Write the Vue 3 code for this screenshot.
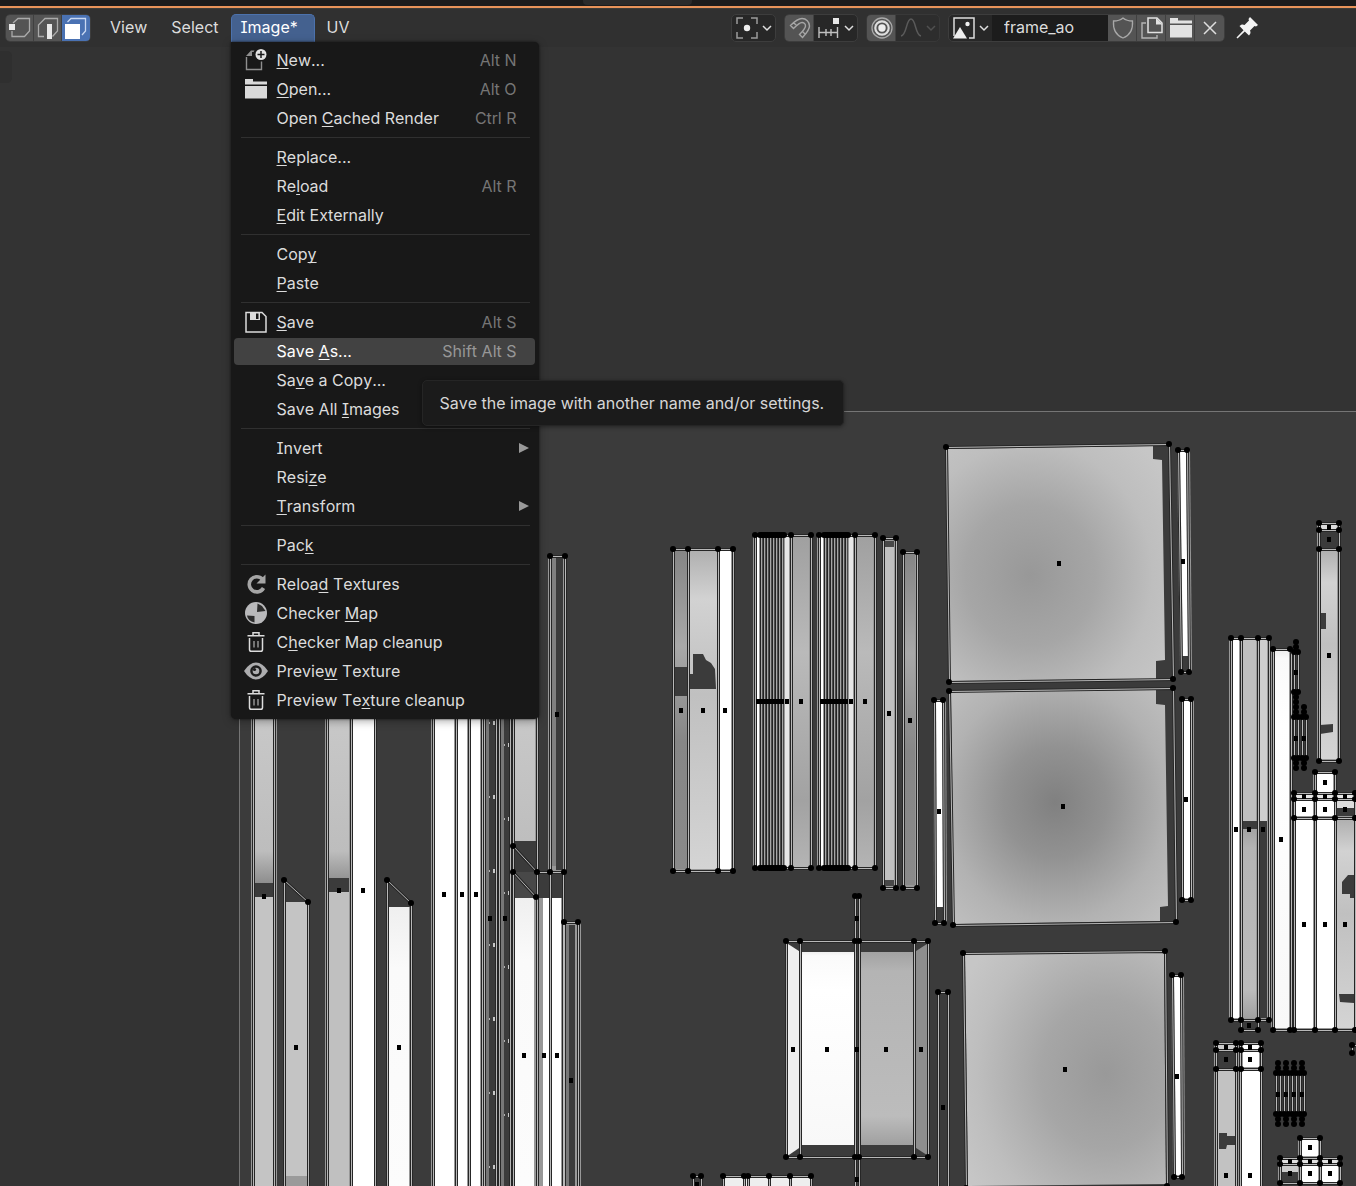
<script setup>
import { ref } from 'vue'

const imageName = ref('frame_ao')

// A label is split as [before, accelerator letter, after].
const menu = [
  [
    { icon: 'new', label: ['', 'N', 'ew...'], keys: 'Alt N' },
    { icon: 'folder', label: ['', 'O', 'pen...'], keys: 'Alt O' },
    { label: ['Open ', 'C', 'ached Render'], keys: 'Ctrl R' }
  ],
  [
    { label: ['', 'R', 'eplace...'] },
    { label: ['Re', 'l', 'oad'], keys: 'Alt R' },
    { label: ['', 'E', 'dit Externally'] }
  ],
  [
    { label: ['Cop', 'y', ''] },
    { label: ['', 'P', 'aste'] }
  ],
  [
    { icon: 'save', label: ['', 'S', 'ave'], keys: 'Alt S' },
    { label: ['Save ', 'A', 's...'], keys: 'Shift Alt S', active: true, tip: 'Save the image with another name and/or settings.' },
    { label: ['Sa', 'v', 'e a Copy...'] },
    { label: ['Save All ', 'I', 'mages'] }
  ],
  [
    { label: ['Invert', '', ''], sub: true },
    { label: ['Resi', 'z', 'e'] },
    { label: ['', 'T', 'ransform'], sub: true }
  ],
  [
    { label: ['Pac', 'k', ''] }
  ],
  [
    { icon: 'reload', label: ['Reloa', 'd', ' Textures'] },
    { icon: 'checker', label: ['Checker ', 'M', 'ap'] },
    { icon: 'trash', label: ['C', 'h', 'ecker Map cleanup'] },
    { icon: 'eye', label: ['Previe', 'w', ' Texture'] },
    { icon: 'trash', label: ['Preview Te', 'x', 'ture cleanup'] }
  ]
]

// UV canvas: baked texture patches, wire edges, vertices and face dots.
const END = 4000
const patches = []
const wires = []
const verts = []
const dots = []

const box = (x1, y1, x2, y2, fill) => patches.push({ d: `M${x1} ${y1}H${x2}V${y2}H${x1}Z`, fill })
const shape = (d, fill) => patches.push({ d, fill })
const wire = d => wires.push(d)
const columns = (xs, y1, y2) => xs.forEach(x => wire(`M${x} ${y1}V${y2}`))
const row = (xs, y) => {
  wire(`M${xs[0]} ${y}H${xs[xs.length - 1]}`)
  xs.forEach(x => verts.push([x, y]))
}
const face = (...pts) => pts.forEach(p => dots.push(p))
const quad = pts => {
  wire('M' + pts.map(p => p.join(' ')).join('L') + 'Z')
  pts.forEach(p => verts.push(p))
}
const MARGIN = '#989898'
const HOLE = '#3b3b3b'

// long strips under the menu
box(251, 560, 277, END, MARGIN)
box(254, 560, 273, 883, 'url(#fadeDown)')
box(254, 883, 276, 897, HOLE)
box(254, 897, 273, END, '#c4c4c4')
columns([253, 274], 560, END)
face([264, 896])

box(283, 902, 310, END, MARGIN)
box(286, 902, 307, 1176, '#c4c4c4')
box(286, 1176, 307, END, '#9a9a9a')
columns([284], 880, END)
columns([308], 902, END)
wire('M284 880L308 902')
verts.push([284, 880], [308, 902])
face([296, 1047])

box(325, 560, 377, END, MARGIN)
box(328, 560, 349, 878, 'url(#fadeDown)')
box(328, 878, 349, 892, HOLE)
box(328, 892, 349, END, '#c0c0c0')
box(353, 560, 374, END, '#fff')
columns([327, 351, 375], 560, END)
face([339, 890], [363, 890])

box(386, 907, 413, END, MARGIN)
box(389, 907, 409, END, 'url(#whiteFade)')
columns([387], 880, END)
columns([411], 903, END)
wire('M387 880L411 903')
verts.push([387, 880], [411, 903])
face([399, 1047])

box(431, 560, 484, END, MARGIN)
box(435, 560, 454, END, '#fff')
box(458, 560, 467, END, '#fff')
box(471, 560, 480, END, '#fff')
columns([433, 456, 469, 482], 560, END)
face([444, 894], [462, 894], [476, 894])

box(484, 560, 489, END, '#777')
box(500, 560, 504, END, '#777')
columns([484, 496, 499, 510], 560, END)
for (let y = 723; y < 1300; y += 74) {
  box(489, y - 1, 490, y + 1, '#b0b0b0')
  box(493, y - 2, 495, y + 2, '#c8c8c8')
  box(504, y + 21, 505, y + 23, '#b0b0b0')
  box(508, y + 20, 510, y + 24, '#c8c8c8')
}
face([490, 918], [505, 918])

box(511, 560, 539, 841, MARGIN)
box(515, 560, 535, 841, 'url(#fadeDown)')
box(511, 898, 564, END, MARGIN)
box(515, 898, 534, END, 'url(#whiteFade)')
box(543, 898, 549, END, '#fff')
box(552, 898, 561, END, '#fff')
box(515, 872, 536, 898, '#484848')
columns([513, 537], 560, END)
columns([550, 563], 872, END)
wire('M513 846L537 872')
wire('M513 872L536 897')
row([537, 550, 564], 872)
verts.push([513, 846], [513, 872], [536, 897])
face([524, 1055], [544, 1055], [557, 1055])

box(548, 556, 567, 872, MARGIN)
box(551, 558, 556, 866, '#808080')
box(556, 558, 563, 870, HOLE)
columns([550, 565], 556, 872)
row([550, 565], 556)
face([557, 714])

box(563, 922, 581, END, MARGIN)
box(565, 925, 569, END, '#777')
box(569, 925, 575, END, HOLE)
columns([564, 578], 922, END)
row([564, 578], 922)
face([571, 1080])

// three-column strip
box(672, 550, 735, 870, MARGIN)
box(675, 551, 687, 869, 'url(#midFade)')
box(675, 667, 687, 696, HOLE)
box(690, 551, 717, 869, 'url(#lightFade)')
box(720, 551, 731, 869, '#fff')
shape('M693 654H703L706 660L711 663L715 669L716 689H690V674H693Z', HOLE)
columns([673, 688, 718, 733], 549, 871)
row([673, 688, 718, 733], 549)
row([673, 688, 718, 733], 871)
face([681, 710], [703, 710], [725, 710])

// slatted strips
for (const o of [0, 64]) {
  box(753 + o, 536, 813 + o, 867, MARGIN)
  box(757 + o, 537, 759 + o, 867, '#fff')
  for (let x = 761; x < 785; x += 3) {
    box(x - 1 + o, 536, x + o, 868, '#222')
    box(x + o, 536, x + 1 + o, 868, '#a6a6a6')
    box(x + 1 + o, 536, x + 2 + o, 868, '#4c4c4c')
  }
  box(785 + o, 537, 789 + o, 867, '#e6e6e6')
  box(793 + o, 537, 809 + o, 867, 'url(#slatFade)')
  columns([755 + o, 791 + o, 811 + o], 535, 868)
  for (const y of [535, 868]) {
    row([755 + o, 791 + o, 811 + o], y)
    for (let x = 760; x < 785; x += 2) verts.push([x + o, y])
  }
  for (let x = 758; x < 784; x += 3) dots.push([x + o, 701])
  face([787 + o, 701], [801 + o, 701])
}
box(882, 538, 898, 888, MARGIN)
box(885, 541, 894, 547, '#484848')
box(885, 547, 894, 880, '#c0c0c0')
box(885, 880, 894, 886, '#484848')
columns([883, 896], 538, 888)
row([883, 896], 538)
row([883, 896], 888)
face([889, 713])
box(902, 552, 919, 888, MARGIN)
box(905, 554, 915, 885, 'url(#midFade)')
columns([903, 917], 552, 888)
row([903, 917], 552)
row([903, 917], 888)
face([910, 720])

// open box with a central spine
shape('M785 942L802 953V1146L786 1157Z', '#eee')
shape('M930 942L913 953V1146L930 1157Z', '#8e8e8e')
box(802, 952, 854, 1145, 'url(#whiteFade)')
box(861, 952, 913, 1145, 'url(#boxFade)')
columns([786, 800, 914, 928], 941, 1157)
columns([855, 859], 896, END)
row([786, 800, 855, 859, 914, 928], 941)
row([786, 800, 855, 859, 914, 928], 1157)
row([855, 859], 896)
face([857, 918], [857, 1179], [793, 1049], [827, 1049], [857, 1049], [886, 1049], [921, 1049])
columns([938, 948], 992, END)
row([938, 948], 992)
face([943, 1107])
columns([693, 701], 1176, END)
row([693, 701], 1176)
face([697, 1184])
box(723, 1178, 813, END, '#eee')
columns([723, 744, 748, 769, 790, 811], 1176, END)
row([723, 744, 748, 769, 790, 811], 1176)

// large panels
shape('M948 449L1153 446V459L1162 460L1165 660L1156 661V679L950 681Z', 'url(#panelA)')
quad([[946, 447], [1169, 444], [1173, 679], [949, 682]])
face([1059, 563])
shape('M951 692L1156 690V704L1165 705L1168 906L1160 907V921L954 924Z', 'url(#panelB)')
quad([[949, 691], [1173, 688], [1176, 922], [953, 925]])
face([1063, 806])
shape('M965 954L1164 952L1166 1184L968 1186Z', 'url(#panelC)')
quad([[963, 953], [1165, 951], [1167, 1186], [966, 1188]])
face([1065, 1069])

const sliver = (pts, whiteEnd, dot) => {
  const [a, b, c, d] = pts
  shape(`M${a[0] - 1} ${a[1]}L${b[0] + 3} ${b[1]}L${c[0] + 3} ${c[1]}L${d[0] - 1} ${d[1]}Z`, MARGIN)
  shape(`M${a[0] + 2} ${a[1] + 2}H${b[0] - 1}L${c[0] - 1} ${whiteEnd}H${d[0] + 2}Z`, '#fff')
  if (whiteEnd < c[1] - 5) box(d[0], whiteEnd, c[0], c[1], HOLE)
  quad(pts)
  face(dot)
}
sliver([[1178, 450], [1187, 450], [1189, 672], [1181, 672]], 656, [1183, 561])
sliver([[934, 700], [943, 700], [944, 923], [935, 923]], 907, [939, 811])
sliver([[1182, 699], [1191, 699], [1191, 900], [1182, 900]], 898, [1186, 799])
sliver([[1172, 975], [1181, 975], [1182, 1177], [1174, 1177]], 1175, [1177, 1076])

// tall strips on the right
box(1229, 639, 1271, 1020, MARGIN)
box(1233, 640, 1239, 1018, '#fff')
box(1243, 640, 1256, 821, '#c0c0c0')
box(1260, 640, 1267, 821, '#cecece')
box(1243, 821, 1267, 829, HOLE)
box(1243, 829, 1256, 1018, 'url(#boxFade)')
box(1260, 829, 1267, 1018, HOLE)
columns([1231, 1241, 1258, 1269], 638, 1020)
row([1231, 1241, 1258, 1269], 638)
row([1231, 1241, 1258, 1269], 1020)
columns([1241, 1258], 1020, 1030)
row([1241, 1258], 1030)
face([1236, 829], [1249, 829], [1263, 829], [1249, 1025])
box(1271, 649, 1292, 1030, MARGIN)
box(1275, 651, 1289, 1028, 'url(#whiteFade)')
columns([1273, 1291], 649, 1030)
row([1273, 1290], 649)
row([1273, 1290], 1030)
face([1281, 839])

const chain = (x, y1, y2, mids) => {
  columns([x - 2, x + 2], y1, y2)
  verts.push([x - 2, y1], [x + 2, y1], [x - 2, y2], [x + 2, y2])
  mids.forEach(y => verts.push([x, y]))
  face([x, Math.round((y1 + y2) / 2)])
}
chain(1296, 652, 692, [642, 647, 697, 702, 707, 712])
chain(1296, 717, 758, [763, 768])
chain(1304, 717, 758, [707, 712, 763, 768])
for (const x of [1278, 1286, 1294, 1302]) chain(x, 1073, 1114, [1063, 1068, 1119, 1124])

box(1317, 523, 1341, 761, MARGIN)
box(1321, 525, 1337, 529, '#ddd')
box(1319, 531, 1339, 549, HOLE)
box(1321, 551, 1337, 759, 'url(#lightFade)')
shape('M1320 613H1326V629H1320Z M1320 725L1333 724V732L1320 734Z', HOLE)
columns([1319, 1339], 523, 761)
for (const y of [523, 530, 549, 761]) row([1319, 1339], y)
face([1329, 527], [1329, 539], [1329, 655])

box(1313, 772, 1337, 793, MARGIN)
box(1317, 774, 1333, 792, '#fff')
box(1292, 793, 1357, 1030, MARGIN)
for (const x of [1296, 1317, 1337]) box(x, 795, x + 17, 798, '#e8e8e8')
for (const x of [1296, 1317]) {
  box(x, 801, x + 17, 816, '#fff')
  box(x, 820, x + 17, 1028, '#fff')
}
box(1337, 801, 1354, 808, '#ddd')
box(1337, 808, 1354, 816, HOLE)
box(1337, 820, 1354, 1028, 'url(#lightFade)')
shape('M1342 882L1348 875H1354V898H1350V894H1342Z M1339 994H1354V1003L1340 1002Z', HOLE)
columns([1315, 1335], 772, 1030)
columns([1294, 1355], 793, 1030)
row([1315, 1335], 772)
for (const y of [793, 799, 818, 1030]) row([1294, 1315, 1335, 1355], y)
face([1325, 782])
for (const x of [1304, 1325, 1345]) face([x, 796], [x, 809], [x, 924])

box(1214, 1043, 1263, END, MARGIN)
box(1218, 1045, 1235, 1049, '#ccc')
box(1218, 1052, 1235, 1068, HOLE)
box(1218, 1071, 1235, END, '#c2c2c2')
box(1243, 1045, 1259, 1049, '#fff')
box(1243, 1052, 1259, 1067, '#fff')
box(1242, 1071, 1260, END, '#fff')
shape('M1219 1133H1227V1136H1235V1145H1227L1226 1149H1219Z', HOLE)
columns([1216, 1236, 1240, 1261], 1043, END)
for (const y of [1043, 1050, 1069]) row([1216, 1236, 1241, 1261], y)
for (const x of [1226, 1250]) face([x, 1047], [x, 1059], [x, 1175])

box(1298, 1138, 1322, 1158, MARGIN)
box(1302, 1140, 1318, 1156, '#fff')
box(1278, 1158, 1342, 1184, MARGIN)
for (const x of [1282, 1302, 1322]) {
  box(x, 1160, x + 16, 1163, '#e0e0e0')
  box(x, 1166, x + 16, 1182, x === 1282 ? '#ccc' : '#fff')
}
box(1282, 1172, 1298, 1182, HOLE)
columns([1300, 1320], 1138, 1183)
columns([1280, 1340], 1158, 1183)
row([1300, 1320], 1138)
for (const y of [1158, 1164, 1183]) row([1280, 1300, 1320, 1340], y)
face([1310, 1147])
for (const x of [1290, 1310, 1330]) face([x, 1161], [x, 1173])
wire('M1352 1045V1053')
verts.push([1352, 1045], [1352, 1053])
wire('M1352 1045H1360')
</script>

<template>
  <main class="app">
    <svg class="canvas" aria-hidden="true">
      <defs>
        <linearGradient id="fadeDown" gradientUnits="userSpaceOnUse" x1="0" y1="720" x2="0" y2="884">
          <stop offset="0" stop-color="#c8c8c8" /><stop offset=".8" stop-color="#bdbdbd" /><stop offset="1" stop-color="#8c8c8c" />
        </linearGradient>
        <linearGradient id="whiteFade" x1="0" y1="0" x2="0" y2="1">
          <stop offset="0" stop-color="#efefef" /><stop offset=".02" stop-color="#fafafa" /><stop offset=".2" stop-color="#fff" /><stop offset="1" stop-color="#f8f8f8" />
        </linearGradient>
        <linearGradient id="midFade" x1="0" y1="0" x2="0" y2="1">
          <stop offset="0" stop-color="#858585" /><stop offset=".3" stop-color="#a8a8a8" /><stop offset=".6" stop-color="#868686" /><stop offset="1" stop-color="#8a8a8a" />
        </linearGradient>
        <linearGradient id="lightFade" x1="0" y1="0" x2="0" y2="1">
          <stop offset="0" stop-color="#b0b0b0" /><stop offset=".15" stop-color="#d2d2d2" /><stop offset=".45" stop-color="#c0c0c0" /><stop offset="1" stop-color="#d4d4d4" />
        </linearGradient>
        <linearGradient id="slatFade" x1="0" y1="0" x2="0" y2="1">
          <stop offset="0" stop-color="#a0a0a0" /><stop offset=".35" stop-color="#bababa" /><stop offset=".8" stop-color="#a2a2a2" /><stop offset="1" stop-color="#b4b4b4" />
        </linearGradient>
        <linearGradient id="boxFade" x1="0" y1="0" x2="0" y2="1">
          <stop offset="0" stop-color="#a2a2a2" /><stop offset=".1" stop-color="#b4b4b4" /><stop offset=".85" stop-color="#bcbcbc" /><stop offset="1" stop-color="#a0a0a0" />
        </linearGradient>
        <radialGradient id="panelA" cx=".38" cy=".55" r=".75">
          <stop offset="0" stop-color="#989898" /><stop offset=".4" stop-color="#a6a6a6" /><stop offset=".75" stop-color="#bebebe" /><stop offset="1" stop-color="#c6c6c6" />
        </radialGradient>
        <radialGradient id="panelB" cx=".48" cy=".48" r=".68">
          <stop offset="0" stop-color="#808080" /><stop offset=".35" stop-color="#929292" /><stop offset=".75" stop-color="#b2b2b2" /><stop offset="1" stop-color="#bebebe" />
        </radialGradient>
        <radialGradient id="panelC" cx=".7" cy=".52" r=".8">
          <stop offset="0" stop-color="#999" /><stop offset=".4" stop-color="#a6a6a6" /><stop offset=".8" stop-color="#bebebe" /><stop offset="1" stop-color="#c6c6c6" />
        </radialGradient>
      </defs>
      <rect x="239" y="411" width="4000" height="4000" fill="#3b3b3b" />
      <path d="M239.5 4000V411.5H4000" fill="none" stroke="#757575" />
      <path v-for="(p, i) in patches" :key="'p' + i" :d="p.d" :fill="p.fill" />
      <g transform="translate(.5 .5)" fill="none">
        <path v-for="(w, i) in wires" :key="'d' + i" :d="w" stroke="#262626" stroke-width="3" />
        <path v-for="(w, i) in wires" :key="'l' + i" :d="w" stroke="#b8b8b8" />
      </g>
      <circle v-for="(v, i) in verts" :key="'v' + i" :cx="v[0]" :cy="v[1]" r="3" />
      <rect v-for="(d, i) in dots" :key="'f' + i" :x="d[0] - 2" :y="d[1] - 2" width="4" height="5" />
    </svg>

    <div class="area-edge"><span></span></div>
    <header class="header">
      <div class="group modes">
        <button type="button" class="cell" aria-label="Vertex select">
          <svg viewBox="0 0 22 22"><path d="M4 6L9 1.500H20.500V14L15.500 19.500H3V14" fill="none" stroke="#aaa" stroke-width="1.300" /><rect x="0" y="7" width="6" height="6" fill="#e8e8e8" /></svg>
        </button>
        <button type="button" class="cell" aria-label="Edge select">
          <svg viewBox="0 0 22 22"><path d="M7 19.500H1.500V8L8 1.500H20.500V14L15.500 19.500" fill="none" stroke="#aaa" stroke-width="1.300" /><rect x="10" y="7" width="5" height="15" fill="#e8e8e8" /></svg>
        </button>
        <button type="button" class="cell on" aria-label="Face select">
          <svg viewBox="0 0 22 22"><path d="M2.500 5L6 1.500H20.500V14L17 18" fill="none" stroke="#c9d8f2" stroke-width="1.300" /><rect x="0" y="7" width="15" height="15" fill="#fff" /></svg>
        </button>
      </div>

      <nav class="menus">
        <button type="button" class="menu-title">View</button>
        <button type="button" class="menu-title">Select</button>
        <div class="menu-anchor">
          <button type="button" class="menu-title open">Image*</button>
          <div class="menu">
            <div v-for="(section, s) in menu" :key="s" class="section">
              <button v-for="item in section" :key="item.label.join('')" type="button" class="item" :class="{ active: item.active }">
                <span class="icon">
                  <svg v-if="item.icon === 'new'" viewBox="0 0 22 22"><path d="M1.500 8V20.500H16.500V12.500" fill="none" stroke="#8f8f8f" stroke-width="1.400" /><path d="M1 7L6 1.500H9.500L8.500 3H7V7Z" fill="#8f8f8f" /><circle cx="16" cy="5.500" r="5.500" fill="#e2e2e2" /><path d="M16 2V9M12.500 5.500H19.500" stroke="#181818" stroke-width="1.500" /></svg>
                  <svg v-else-if="item.icon === 'folder'" viewBox="0 0 22 22"><path d="M0 1H8V3.500H22V6.500H0ZM0 8H22V20.500H0Z" fill="#dadada" /></svg>
                  <svg v-else-if="item.icon === 'save'" viewBox="0 0 22 22"><path d="M1 1.500H17L21 5.500V21H1Z" fill="none" stroke="#dcdcdc" stroke-width="1.500" /><path d="M5 1H15V9H5Z" fill="#dcdcdc" /><path d="M11 2.500H13.500V8H11Z" fill="#181818" /></svg>
                  <svg v-else-if="item.icon === 'reload'" viewBox="0 0 22 22"><path d="M17.500 6.200A7.600 7.600 0 1 0 18.500 15" fill="none" stroke="#a5a5a5" stroke-width="3.600" /><path d="M20.500 1.500V10.500H11.500Z" fill="#a5a5a5" /></svg>
                  <svg v-else-if="item.icon === 'checker'" viewBox="0 0 22 22"><circle cx="11" cy="11" r="11" fill="#b9b9bb" /><path d="M12.500 1.500L17 4L20.500 9L12 10Z" fill="#2c2c2c" /><path d="M2 13.500L9.500 14V20.500C5 19.500 2.500 17 2 13.500Z" fill="#2c2c2c" /></svg>
                  <svg v-else-if="item.icon === 'trash'" viewBox="0 0 22 22"><path d="M2.500 4.700H19.500M8 4.500V1.800H14V4.500M4.500 7V18.500Q4.500 20.300 6.300 20.300H15.700Q17.500 20.300 17.500 18.500V7" fill="none" stroke="#dcdcdc" stroke-width="1.500" /><path d="M9 10V16.500M13 10V16.500" stroke="#9a9a9a" stroke-width="1.400" /></svg>
                  <svg v-else-if="item.icon === 'eye'" viewBox="0 0 22 22"><path d="M-1 11Q4.500 2.500 11 2.500Q17.500 2.500 23 11Q17.500 19.500 11 19.500Q4.500 19.500 -1 11Z" fill="#adadaf" /><circle cx="11" cy="11" r="5.800" fill="#1c1c1c" /><circle cx="11" cy="11" r="3.300" fill="#adadaf" /><circle cx="9.500" cy="9.500" r="1.600" fill="#1c1c1c" /></svg>
                </span>
                <span class="label">{{ item.label[0] }}<u>{{ item.label[1] }}</u>{{ item.label[2] }}</span>
                <span v-if="item.keys" class="keys">{{ item.keys }}</span>
                <svg v-if="item.sub" class="arrow" viewBox="0 0 10 10"><path d="M0 0L10 5L0 10Z" fill="#999" /></svg>
                <span v-if="item.tip" class="tip" role="tooltip">{{ item.tip }}</span>
              </button>
            </div>
          </div>
        </div>
        <button type="button" class="menu-title">UV</button>
      </nav>

      <div class="tools">
        <button type="button" class="group drop" aria-label="Pivot point">
          <svg class="ic" viewBox="0 0 22 22"><path d="M1 7V1H7M15 1H21V7M21 15V21H15M7 21H1V15" fill="none" stroke="#9c9c9c" stroke-width="1.500" /><circle cx="11" cy="11" r="3.200" fill="#eee" /></svg>
          <svg class="chev" viewBox="0 0 10 6"><path d="M1 1L5 5L9 1" /></svg>
        </button>
        <div class="group">
          <button type="button" class="cell" aria-label="Snap">
            <svg viewBox="0 0 22 22"><path d="M1.500 8.500C6 4 9 1.500 13 1.500A7.500 7.500 0 0 1 20.500 9C20.500 13 17 16.500 13.500 20.500L10.500 17.500C13.500 14.500 16.500 11.500 16.500 9A3.500 3.500 0 0 0 13 5.500C10.500 5.500 8 8 4.500 11.500ZM4.500 5.500L7.500 8.500M13.500 14.500L16.500 17.500" fill="none" stroke="#a6a6a6" stroke-width="1.400" /></svg>
          </button>
          <button type="button" class="drop" aria-label="Snapping options">
            <svg class="ic" viewBox="0 0 22 22"><path d="M1 10V21M8 12V19M13 12V19M19.500 10V21M1 15.500H19.500" fill="none" stroke="#c0c0c0" stroke-width="1.400" /><path d="M15 1H21V7H15Z" fill="#e8e8e8" /></svg>
            <svg class="chev" viewBox="0 0 10 6"><path d="M1 1L5 5L9 1" /></svg>
          </button>
        </div>
        <div class="group faded">
          <button type="button" class="cell" aria-label="Proportional editing">
            <svg viewBox="0 0 22 22"><circle cx="11" cy="11" r="10" fill="none" stroke="#aaa" stroke-width="1.300" /><circle cx="11" cy="11" r="6.700" fill="none" stroke="#dedede" stroke-width="2.200" /><circle cx="11" cy="11" r="3.700" fill="#eee" /></svg>
          </button>
          <button type="button" class="drop dim" aria-label="Falloff">
            <svg class="ic" viewBox="0 0 22 22"><path d="M1 19C7 18 6 2 11 2S15 18 21 19" fill="none" stroke="#5a5a5a" stroke-width="1.500" /></svg>
            <svg class="chev" viewBox="0 0 10 6"><path d="M1 1L5 5L9 1" /></svg>
          </button>
        </div>
        <div class="group">
          <button type="button" class="drop" aria-label="Browse image">
            <svg class="ic" viewBox="0 0 22 22"><path d="M1 19V1H21V21H16" fill="none" stroke="#dedede" stroke-width="1.500" /><path d="M0 21.500L7 10L14 21.500Z" fill="#eee" /><circle cx="14.500" cy="7" r="2.200" fill="#eee" /></svg>
            <svg class="chev" viewBox="0 0 10 6"><path d="M1 1L5 5L9 1" /></svg>
          </button>
          <input v-model="imageName" class="name" type="text" aria-label="Image name" />
          <button type="button" class="cell" aria-label="Fake user">
            <svg viewBox="0 0 22 22"><path d="M11 1C8 3.500 4.500 4 1.500 4C1 11 3 18 11 21C19 18 21 11 20.500 4C17.500 4 14 3.500 11 1Z" fill="none" stroke="#a8a8a8" stroke-width="1.300" /></svg>
          </button>
          <button type="button" class="cell" aria-label="New image">
            <svg viewBox="0 0 22 22"><path d="M5 6H1V21H16V18" fill="none" stroke="#b4b4b4" stroke-width="1.400" /><path d="M7 1H16L21 6V15.500H7Z" fill="none" stroke="#e2e2e2" stroke-width="1.500" /><path d="M15 1L21.500 7.500H15Z" fill="#e2e2e2" /></svg>
          </button>
          <button type="button" class="cell" aria-label="Open image">
            <svg viewBox="0 0 22 22"><path d="M0 1H8V3.500H22V6.500H0ZM0 8H22V20.500H0Z" fill="#e2e2e2" /></svg>
          </button>
          <button type="button" class="cell" aria-label="Unlink image">
            <svg viewBox="0 0 22 22"><path d="M5 5L17 17M17 5L5 17" stroke="#dedede" stroke-width="1.500" /></svg>
          </button>
        </div>
        <button type="button" class="pin" aria-label="Pin image">
          <svg viewBox="0 0 22 22"><path d="M14 0L22 8L20 9.500L18.500 9L14 13.500C15 15.500 14.500 17 13 18.500L8.800 14.500L1.500 21.500L0.500 20.500L7.500 13.200L3.500 9C5 7.500 6.500 7 8.500 8L13 3.500L12.500 2Z" fill="#f4f4f4" /></svg>
        </button>
      </div>
    </header>
    <div class="toolbar-edge"></div>
  </main>
</template>

<style>
body {
  margin: 0;
  background: #333;
}
</style>

<style scoped>
.app {
  position: relative;
  min-height: 100vh;
  overflow: hidden;
  background: #333;
  color: #dcdcdc;
  font: 16px/20px Inter, "Liberation Sans", sans-serif;
  font-feature-settings: "cv08" 1;
  font-kerning: none;
}
.canvas {
  position: absolute;
  inset: 0;
  width: 100%;
  height: 100%;
}
svg {
  display: block;
  overflow: visible;
}
button,
input {
  margin: 0;
  padding: 0;
  border: 0;
  background: none;
  color: inherit;
  font: inherit;
  font-feature-settings: inherit;
  font-kerning: inherit;
}
.area-edge {
  position: relative;
  height: 6px;
  background: #1c1c1c;
  border-bottom: 2px solid #e8935a;
}
.area-edge span {
  display: block;
  width: 8%;
  height: 5px;
  margin-left: 43%;
  background: #2b2b2b;
  border-radius: 0 0 4px 4px;
}
.header {
  position: relative;
  display: flex;
  align-items: flex-start;
  height: 33px;
  padding: 5px 98px 0 5px;
  background: #303030;
  border-top: 1px solid #3c3c38;
}
.group {
  display: flex;
  box-sizing: border-box;
  height: 28px;
  border: 1px solid #3d3d3d;
  border-radius: 5px;
  background: #272727;
  overflow: hidden;
}
.cell {
  display: flex;
  align-items: center;
  justify-content: center;
  width: 29px;
  background: #545454;
  box-shadow: inset -1px 0 #404040;
}
.cell:last-child {
  box-shadow: none;
}
.cell svg,
.ic {
  flex: none;
  width: 22px;
  height: 22px;
}
.modes .cell {
  width: 28px;
}
.cell.on {
  background: #4a72b3;
}
.menus {
  display: flex;
  margin-left: 7px;
}
.menu-title {
  height: 28px;
  padding: 0 12px 2px;
  border-radius: 5px 5px 0 0;
}
.menu-anchor {
  position: relative;
}
.menu-title.open {
  width: 84px;
  background: #44618f;
  border: 1px solid #4c72ad;
  border-bottom: 0;
  color: #fff;
  padding: 0 9px 3px;
  text-align: left;
}
.menu {
  position: absolute;
  z-index: 2;
  top: 28px;
  left: 0;
  width: 308px;
  padding: 5px 0;
  background: #181818;
  border-radius: 0 5px 5px 5px;
  box-shadow: 0 0 2px #111, 0 2px 8px rgba(0, 0, 0, 0.35);
}
.section {
  display: flex;
  flex-direction: column;
  gap: 2px;
}
.section + .section {
  position: relative;
  margin-top: 5px;
  padding-top: 7px;
}
.section + .section::before {
  content: "";
  position: absolute;
  top: 0;
  left: 10px;
  right: 9px;
  height: 1px;
  background: #303030;
}
.item {
  position: relative;
  display: flex;
  align-items: center;
  height: 27px;
  margin: 0 4px 0 3px;
  padding: 0 18px 2px 11px;
  border-radius: 4px;
  text-align: left;
  white-space: nowrap;
}
.item.active {
  background: #424242;
  color: #fff;
}
.icon {
  flex: none;
  width: 22px;
  height: 22px;
  margin-right: 10px;
}
.label {
  flex: 1;
}
.label u {
  text-decoration-thickness: 1px;
  text-underline-offset: 2px;
  text-decoration-skip-ink: none;
}
.keys {
  color: #757575;
}
.active .keys {
  color: #979797;
}
.arrow {
  width: 10px;
  height: 10px;
  margin-right: -12px;
}
.tip {
  position: absolute;
  z-index: 3;
  top: 42px;
  left: 188px;
  padding: 12px 19px 12px 17px;
  border: 1px solid #252525;
  border-radius: 5px;
  background: #1b1b1b;
  color: #d6d6d6;
  box-shadow: 0 1px 4px rgba(0, 0, 0, 0.4);
}
.tools {
  display: flex;
  gap: 8px;
  margin-left: auto;
}
.drop {
  display: flex;
  align-items: center;
  gap: 4px;
  width: 43px;
  padding: 0 3px 0 4px;
}
.group.drop {
  width: 45px;
}
.chev {
  flex: none;
  width: 10px;
  height: 6px;
  fill: none;
  stroke: #dedede;
  stroke-width: 1.5;
}
.dim .chev {
  stroke: #505050;
}
.faded {
  background: #2d2d2d;
  border-color: #383838;
}
.name {
  width: 104px;
  padding-left: 12px;
  padding-bottom: 2px;
  background: #1c1c1c;
}
.pin {
  width: 22px;
  height: 22px;
  margin: 3px 0 0 3px;
}
.toolbar-edge {
  position: relative;
  width: 12px;
  height: 32px;
  margin-top: 4px;
  background: #2f2f2f;
  border-radius: 0 5px 5px 0;
}
</style>
